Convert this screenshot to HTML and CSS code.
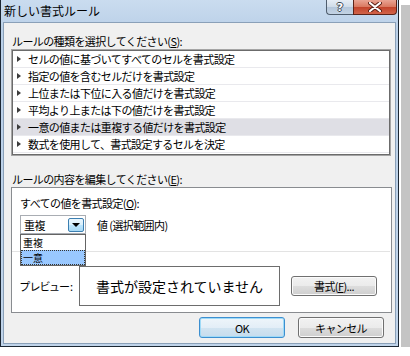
FILE: index.html
```html
<!DOCTYPE html>
<html lang="ja">

<head>
  <meta charset="UTF-8">
  <title>新しい書式ルール</title>
  <link rel="stylesheet" href="styles.css">
</head>

<body>
  <div class="window">
    <div class="titlebar">
      <span class="title">新しい書式ルール</span>
      <div class="caption">
        <span class="cap-help">?</span>
        <span class="cap-close">
          <svg width="14" height="10" viewBox="0 0 14 10">
            <path d="M2 1 L12 9 M12 1 L2 9" stroke="#5a1e14" stroke-width="4" stroke-linecap="round" />
            <path d="M2 1 L12 9 M12 1 L2 9" stroke="#fff" stroke-width="2.2" stroke-linecap="round" />
          </svg>
        </span>
      </div>
    </div>

    <div class="client">
      <div class="label">ルールの種類を選択してください(<u>S</u>):</div>
      <ul class="rule-list">
        <li>セルの値に基づいてすべてのセルを書式設定</li>
        <li>指定の値を含むセルだけを書式設定</li>
        <li>上位または下位に入る値だけを書式設定</li>
        <li>平均より上または下の値だけを書式設定</li>
        <li class="current">一意の値または重複する値だけを書式設定</li>
        <li>数式を使用して、書式設定するセルを決定</li>
      </ul>

      <div class="label label-edit">ルールの内容を編集してください(<u>E</u>):</div>
      <div class="panel">
        <div class="panel-label">すべての値を書式設定(<u>O</u>):</div>
        <div class="combo-row">
          <div class="combo">
            <span>重複</span>
            <span class="combo-btn"></span>
            <ul class="combo-list">
              <li>重複</li>
              <li class="selected">一意</li>
            </ul>
          </div>
          <span class="combo-note">値 (選択範囲内)</span>
        </div>
        <div class="sep"></div>
        <div class="preview-row">
          <span class="preview-label">プレビュー:</span>
          <div class="preview">書式が設定されていません</div>
          <button class="btn btn-format">書式(<u>F</u>)...</button>
        </div>
      </div>

      <div class="actions">
        <button class="btn btn-ok">OK</button>
        <button class="btn">キャンセル</button>
      </div>
    </div>
  </div>
</body>

</html>
```

FILE: styles.css
```css
* {
  margin: 0;
  padding: 0;
  box-sizing: border-box;
  list-style: none;
}

body {
  background: #fff;
  font-family: "Noto Sans CJK JP", sans-serif;
  font-size: 11px;
  letter-spacing: -0.6px;
  color: #000;
}

.window {
  width: 399px;
  height: 347px;
  display: flex;
  flex-direction: column;
  padding: 0 2px 2px;
  border: 1px solid #1c2733;
  border-top: 0;
  background: linear-gradient(#cadcef, #bad0e8 30px, #c0d4ea);
  box-shadow: 0 0 0 2px #fff, 10px 7px 0 2px #c4c4c4;
}

.titlebar {
  height: 22px;
  display: flex;
  margin-right: -1px;
}

.title {
  align-self: center;
  padding-left: 1px;
  font-size: 12px;
  letter-spacing: 0;
  line-height: 14px;
}

.caption {
  margin-left: auto;
  display: flex;
  height: 15px;
}

.cap-help,
.cap-close {
  display: flex;
  align-items: center;
  justify-content: center;
  height: 15px;
  border: 1px solid #4f5d6d;
  border-top: 0;
}

.cap-help {
  width: 27px;
  border-right: 0;
  border-radius: 0 0 0 4px;
  background: linear-gradient(#e6edf5, #cfdbe8 50%, #b4c6da 50%, #c3d3e4);
  color: #fff;
  font-family: "DejaVu Sans", sans-serif;
  font-weight: bold;
  font-size: 11px;
  letter-spacing: 0;
  text-shadow: 1px 0 0 #3b4653, -1px 0 0 #3b4653, 0 1px 0 #3b4653, 0 -1px 0 #3b4653;
}

.cap-close {
  width: 44px;
  border-color: #5c2318;
  border-radius: 0 0 4px 0;
  background: linear-gradient(#e9a493, #d9775f 50%, #c2422a 50%, #d1644a);
}

.client {
  flex: 1;
  border: 1px solid #8aa0b8;
  background: #f0f0f0;
  padding: 11px 4px 0 7px;
  display: flex;
  flex-direction: column;
}

.label {
  height: 14px;
  line-height: 14px;
  padding-left: 1px;
}

.rule-list {
  margin-top: 1px;
  width: 380px;
  height: 107px;
  padding: 1px;
  border: 1px solid #a5a5a5;
  box-shadow: inset 0 0 0 1px #6b6b6b;
  background: #fff;
}

.rule-list li {
  height: 17px;
  display: flex;
  align-items: center;
  padding-left: 4px;
  border-bottom: 1px solid #e9e9ed;
  white-space: nowrap;
}

.rule-list li::before {
  content: "";
  margin-right: 7px;
  border-left: 4px solid #3c3c3c;
  border-top: 3px solid transparent;
  border-bottom: 3px solid transparent;
}

.rule-list li.current {
  background: #dfdfe5;
}

.label-edit {
  margin-top: 16px;
}

.panel {
  margin-top: 1px;
  width: 381px;
  height: 126px;
  border: 1px solid #898c90;
  background: #fff;
  display: flex;
  flex-direction: column;
}

.panel-label {
  margin-top: 8px;
  padding-left: 8px;
  height: 14px;
  line-height: 14px;
}

.combo-row {
  margin-top: 5px;
  padding-left: 8px;
  display: flex;
  align-items: center;
  height: 19px;
}

.combo {
  position: relative;
  width: 66px;
  height: 19px;
  border: 1px solid #a9adb3;
  background: #fff;
  display: flex;
  align-items: center;
  justify-content: space-between;
  padding: 0 1px 0 3px;
}

.combo-btn {
  width: 16px;
  height: 14px;
  border: 1px solid #3c7fb1;
  border-radius: 2px;
  background: linear-gradient(#eaf6fd, #d9f0fc 50%, #bee6fd 50%, #a7d9f5);
  display: flex;
  align-items: center;
  justify-content: center;
}

.combo-btn::after {
  content: "";
  margin-top: 1px;
  border-top: 4px solid #000;
  border-left: 4px solid transparent;
  border-right: 4px solid transparent;
}

.combo-list {
  position: absolute;
  top: 18px;
  left: -1px;
  width: 66px;
  border: 1px solid #646464;
  background: #fff;
  z-index: 2;
}

.combo-list li {
  height: 15px;
  line-height: 15px;
  padding-left: 2px;
  font-size: 10px;
  letter-spacing: 0;
  overflow: hidden;
}

.combo-list li.selected {
  background: #99c8ff;
  outline: 1px dotted #333;
  outline-offset: -1px;
}

.combo-note {
  margin-left: 11px;
}

.sep {
  margin-top: 17px;
  margin-right: 1px;
  height: 1px;
  background: #e3e3e3;
}

.preview-row {
  margin-top: 14px;
  padding-left: 8px;
  display: flex;
  align-items: center;
  height: 40px;
}

.preview-label {
  width: 59px;
  flex: none;
  letter-spacing: 0;
  font-feature-settings: "palt";
}

.preview {
  width: 201px;
  height: 40px;
  border: 1px solid #6d6d6d;
  background: #fff;
  font-size: 14px;
  letter-spacing: 0;
  display: flex;
  align-items: center;
  justify-content: center;
}

.btn {
  width: 86px;
  height: 21px;
  font-family: "Noto Sans CJK JP", sans-serif;
  font-size: 11px;
  letter-spacing: -0.6px;
  color: #000;
  border: 1px solid #707070;
  border-radius: 3px;
  background: linear-gradient(#f2f2f2, #ebebeb 50%, #dddddd 50%, #cfcfcf);
  box-shadow: inset 0 0 0 1px #fbfbfb;
}

.btn-format {
  margin-left: 11px;
  height: 20px;
}

.actions {
  margin-top: 4px;
  margin-right: 7px;
  display: flex;
  justify-content: flex-end;
  gap: 13px;
}

.btn-ok {
  border-color: #3c8fd0;
  background: linear-gradient(#eef5fa, #e3eef7 50%, #d2e4f1 50%, #c6dced);
  box-shadow: inset 0 0 0 1px #9fdaf7;
}
```
